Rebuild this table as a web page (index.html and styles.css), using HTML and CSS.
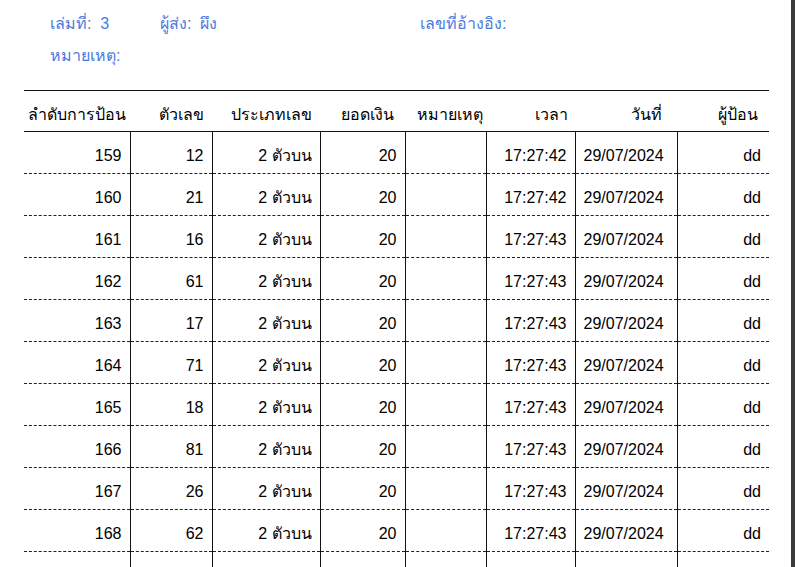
FILE: index.html
```html
<!DOCTYPE html>
<html lang="th">
<head>
<meta charset="utf-8">
<link rel="stylesheet" href="styles.css">
</head>
<body>
<div class="page">
  <div class="info">
    <div class="info-item">เล่มที่: &nbsp;3</div>
    <div class="info-item">ผู้ส่ง: &nbsp;ผึง</div>
    <div class="info-item">เลขที่อ้างอิง:</div>
    <div class="info-item info-note">หมายเหตุ:</div>
  </div>
  <table class="grid">
    <colgroup>
      <col style="width:106px"><col style="width:82px"><col style="width:108px"><col style="width:85px">
      <col style="width:81px"><col style="width:89px"><col style="width:102px"><col style="width:92px">
    </colgroup>
    <thead>
      <tr>
        <th class="h1">ลำดับการป้อน</th>
        <th class="h2">ตัวเลข</th>
        <th class="h3">ประเภทเลข</th>
        <th class="h4">ยอดเงิน</th>
        <th class="h5">หมายเหตุ</th>
        <th class="h6">เวลา</th>
        <th class="h7">วันที่</th>
        <th class="h8">ผู้ป้อน</th>
      </tr>
    </thead>
    <tbody>
      <tr><td>159</td><td>12</td><td>2 ตัวบน</td><td>20</td><td></td><td>17:27:42</td><td class="date">29/07/2024</td><td>dd</td></tr>
      <tr><td>160</td><td>21</td><td>2 ตัวบน</td><td>20</td><td></td><td>17:27:42</td><td class="date">29/07/2024</td><td>dd</td></tr>
      <tr><td>161</td><td>16</td><td>2 ตัวบน</td><td>20</td><td></td><td>17:27:43</td><td class="date">29/07/2024</td><td>dd</td></tr>
      <tr><td>162</td><td>61</td><td>2 ตัวบน</td><td>20</td><td></td><td>17:27:43</td><td class="date">29/07/2024</td><td>dd</td></tr>
      <tr><td>163</td><td>17</td><td>2 ตัวบน</td><td>20</td><td></td><td>17:27:43</td><td class="date">29/07/2024</td><td>dd</td></tr>
      <tr><td>164</td><td>71</td><td>2 ตัวบน</td><td>20</td><td></td><td>17:27:43</td><td class="date">29/07/2024</td><td>dd</td></tr>
      <tr><td>165</td><td>18</td><td>2 ตัวบน</td><td>20</td><td></td><td>17:27:43</td><td class="date">29/07/2024</td><td>dd</td></tr>
      <tr><td>166</td><td>81</td><td>2 ตัวบน</td><td>20</td><td></td><td>17:27:43</td><td class="date">29/07/2024</td><td>dd</td></tr>
      <tr><td>167</td><td>26</td><td>2 ตัวบน</td><td>20</td><td></td><td>17:27:43</td><td class="date">29/07/2024</td><td>dd</td></tr>
      <tr><td>168</td><td>62</td><td>2 ตัวบน</td><td>20</td><td></td><td>17:27:43</td><td class="date">29/07/2024</td><td>dd</td></tr>
      <tr><td></td><td></td><td></td><td></td><td></td><td></td><td></td><td></td></tr>
    </tbody>
  </table>
</div>
</body>
</html>
```
FILE: styles.css
```css
html, body {
  margin: 0;
  padding: 0;
  background: #ffffff;
  overflow: hidden;
}
body {
  font-family: "Liberation Sans", "Noto Sans", sans-serif;
  font-size: 16px;
  color: #111;
}
.page {
  width: 795px;
  height: 567px;
  border-right: 4px solid #3b3b3b;
  padding-left: 24px;
  box-sizing: border-box;
  overflow: hidden;
}
.info {
  display: grid;
  grid-template-columns: 110px 260px 1fr;
  grid-template-rows: 32px 32px;
  padding: 7px 0 0 26px;
  height: 90px;
  box-sizing: border-box;
  color: #4a7be0;
  font-size: 16px;
  align-items: center;
}
.info-note {
  grid-column: 1 / 4;
}
.grid {
  border-collapse: collapse;
  table-layout: fixed;
  width: 745px;
}
.grid th {
  font-weight: normal;
  box-sizing: border-box;
  height: 41px;
  padding: 7px 8px 0 0;
  text-align: right;
  border-top: 1px solid #111;
  border-bottom: 1px solid #111;
  white-space: nowrap;
  color: #000;
}
.grid th.h1 { text-align: center; padding-right: 0; }
.grid th.h4 { padding-right: 11px; }
.grid th.h5 { padding-right: 3px; }
.grid th.h6 { padding-right: 7px; }
.grid th.h7 { padding-right: 15px; }
.grid th.h8 { padding-right: 11px; }
.grid td {
  box-sizing: border-box;
  height: 42px;
  padding: 6px 8px 0 0;
  text-align: right;
  border-bottom: 1px dashed #222;
  border-left: 1px solid #111;
  white-space: nowrap;
  color: #000;
}
.grid td:first-child {
  border-left: none;
}
.grid td.date {
  text-align: left;
  padding-left: 8px;
}
```
